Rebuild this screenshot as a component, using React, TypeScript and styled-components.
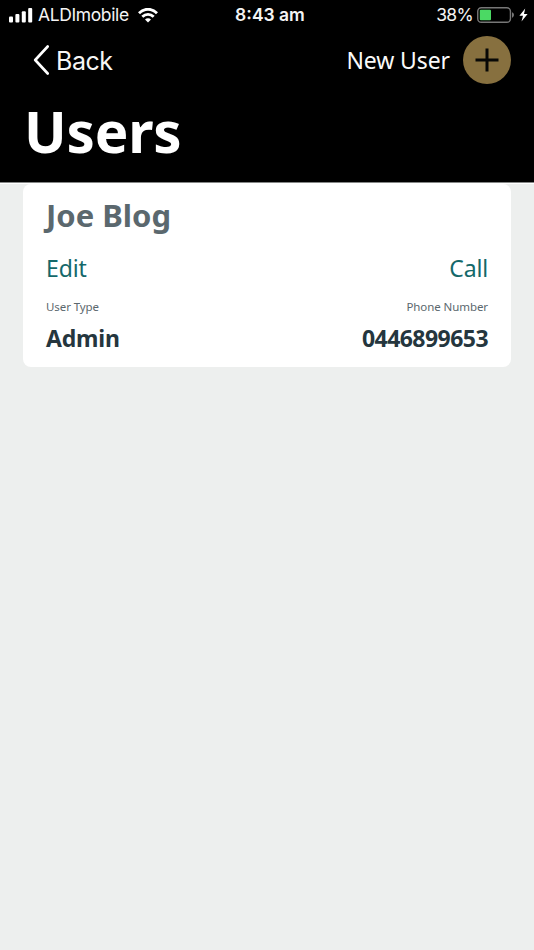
import React from "react";
import styled, { createGlobalStyle } from "styled-components";

const GlobalStyle = createGlobalStyle`
  * { box-sizing: border-box; }
  body {
    margin: 0;
    background: #edefee;
    font-family: "Noto Sans", sans-serif;
  }
  h1, h2, p { margin: 0; }
  button { border: 0; padding: 0; background: none; font-family: inherit; }
  svg { display: block; flex: none; }
`;

const Screen = styled.main`
  min-height: 950px;
  background: #edefee;
`;

const Header = styled.header`
  height: 183px;
  background: #000;
  color: #fff;
  border-bottom: 1px solid #858786;
`;

const StatusBar = styled.div`
  height: 30px;
  display: grid;
  grid-template-columns: 1fr auto 1fr;
  align-items: center;
  padding: 0 6px 0 9px;
  font-family: Inter, sans-serif;
  color: #f4f4f4;
`;

const StatusGroup = styled.div<{ $end?: boolean }>`
  display: flex;
  align-items: center;
  justify-content: ${(p) => (p.$end ? "flex-end" : "flex-start")};
`;

const StatusText = styled.span<{ $weight?: number; $tracking?: number }>`
  font-size: 17.5px;
  font-weight: ${(p) => p.$weight ?? 400};
  letter-spacing: ${(p) => p.$tracking ?? 0}px;
  line-height: 30px;
  white-space: nowrap;
`;

const Carrier = styled(StatusText)`
  margin: 0 9px 0 5px;
`;

const Clock = styled(StatusText)`
  padding-left: 3px;
`;

const Percent = styled(StatusText)`
  margin-right: 4px;
`;

const NavBar = styled.nav`
  height: 60px;
  display: flex;
  align-items: center;
  justify-content: space-between;
  padding: 0 23px 0 33px;
`;

const BackButton = styled.button`
  display: flex;
  align-items: center;
  gap: 7px;
  color: #f6f6f6;
  font-family: Inter, sans-serif;
  font-size: 25px;
  letter-spacing: -0.45px;
  line-height: 30px;
`;

const BackLabel = styled.span`
  padding-top: 1px;
`;

const NewUser = styled.button`
  display: flex;
  align-items: center;
  gap: 13px;
  color: #fafafa;
  font-size: 23px;
  letter-spacing: -0.1px;
  line-height: 32px;
`;

const AddCircle = styled.span`
  width: 48px;
  height: 48px;
  border-radius: 50%;
  display: grid;
  place-items: center;
  background: #87703f;
`;

const Title = styled.h1`
  padding: 1px 0 0 24px;
  font-size: 56.5px;
  font-weight: 700;
  letter-spacing: -0.2px;
  line-height: 81px;
`;

const Content = styled.section`
  padding: 0 23px;
  border-top: 1px solid #fff;
`;

const Card = styled.article`
  height: 183px;
  padding: 7px 23px 0;
  border-radius: 8px;
  background: #fff;
`;

const Name = styled.h2`
  color: #5b686e;
  font-size: 31px;
  font-weight: 700;
  line-height: 48px;
`;

const Row = styled.div`
  display: flex;
  justify-content: space-between;
`;

const Action = styled.button`
  color: #14686a;
  font-size: 23px;
  letter-spacing: -0.15px;
  line-height: 58px;
`;

const Label = styled.p`
  color: #5b686e;
  font-size: 11.5px;
  letter-spacing: -0.08px;
  line-height: 19px;
`;

const Value = styled.p<{ $tracking: number }>`
  color: #25363e;
  font-size: 23px;
  font-weight: 700;
  letter-spacing: ${(p) => p.$tracking}px;
  line-height: 45px;
`;

const SignalIcon = () => (
  <svg width="24" height="15" viewBox="0 0 24 15" fill="#fff">
    <rect x="0" y="8.5" width="4" height="6" rx="1" />
    <rect x="6.4" y="6" width="4" height="8.5" rx="1" />
    <rect x="12.8" y="3.3" width="4" height="11.2" rx="1" />
    <rect x="19.2" y="0" width="4" height="14.5" rx="1" />
  </svg>
);

const WifiIcon = () => (
  <svg width="20" height="15" viewBox="0 0 20 15" fill="none" stroke="#fff" strokeWidth="2.8">
    <path d="M1 5.2C6-.1 14-.1 19 5.2" />
    <path d="M4.3 8.8C7.6 5.5 12.4 5.5 15.7 8.8" />
    <path d="M10 14.6 7 11.5C8.6 9.9 11.4 9.9 13 11.5Z" fill="#fff" stroke="none" />
  </svg>
);

const BatteryIcon = () => (
  <svg width="38" height="16" viewBox="0 0 38 16">
    <rect x=".75" y=".75" width="32.7" height="14.5" rx="3.6" fill="none" stroke="#777" strokeWidth="1.4" />
    <rect x="2.8" y="2.8" width="11.2" height="10.4" rx="1" fill="#4bd964" />
    <path d="M35 5.3C37.6 6 37.6 10 35 10.7Z" fill="#777" />
  </svg>
);

const BoltIcon = () => (
  <svg width="13" height="14" viewBox="-4 0 13 14" fill="#fff">
    <path d="M6.2.5.4 7.7H4L2.5 13.5 8.6 5.9H5Z" />
  </svg>
);

const ChevronIcon = () => (
  <svg width="16" height="30" viewBox="0 0 16 30" fill="none" stroke="#fff" strokeWidth="2.6">
    <path d="M14.7 1.5 2.2 15 14.7 28.5" strokeLinecap="round" strokeLinejoin="round" />
  </svg>
);

const PlusIcon = () => (
  <svg width="24" height="24" viewBox="0 0 24 24" stroke="#080806" strokeWidth="3">
    <path d="M.5 12H23.5M12 .5V23.5" />
  </svg>
);

export default function App() {
  return (
    <>
      <GlobalStyle />
      <Screen>
        <Header>
          <StatusBar>
            <StatusGroup>
              <SignalIcon />
              <Carrier $tracking={-0.38}>ALDImobile</Carrier>
              <WifiIcon />
            </StatusGroup>
            <Clock $weight={600}>8:43 am</Clock>
            <StatusGroup $end>
              <Percent $tracking={-0.7}>38%</Percent>
              <BatteryIcon />
              <BoltIcon />
            </StatusGroup>
          </StatusBar>
          <NavBar>
            <BackButton>
              <ChevronIcon />
              <BackLabel>Back</BackLabel>
            </BackButton>
            <NewUser>
              New User
              <AddCircle>
                <PlusIcon />
              </AddCircle>
            </NewUser>
          </NavBar>
          <Title>Users</Title>
        </Header>
        <Content>
          <Card>
            <Name>Joe Blog</Name>
            <Row>
              <Action>Edit</Action>
              <Action>Call</Action>
            </Row>
            <Row>
              <Label>User Type</Label>
              <Label>Phone Number</Label>
            </Row>
            <Row>
              <Value $tracking={-0.2}>Admin</Value>
              <Value $tracking={-0.55}>0446899653</Value>
            </Row>
          </Card>
        </Content>
      </Screen>
    </>
  );
}
